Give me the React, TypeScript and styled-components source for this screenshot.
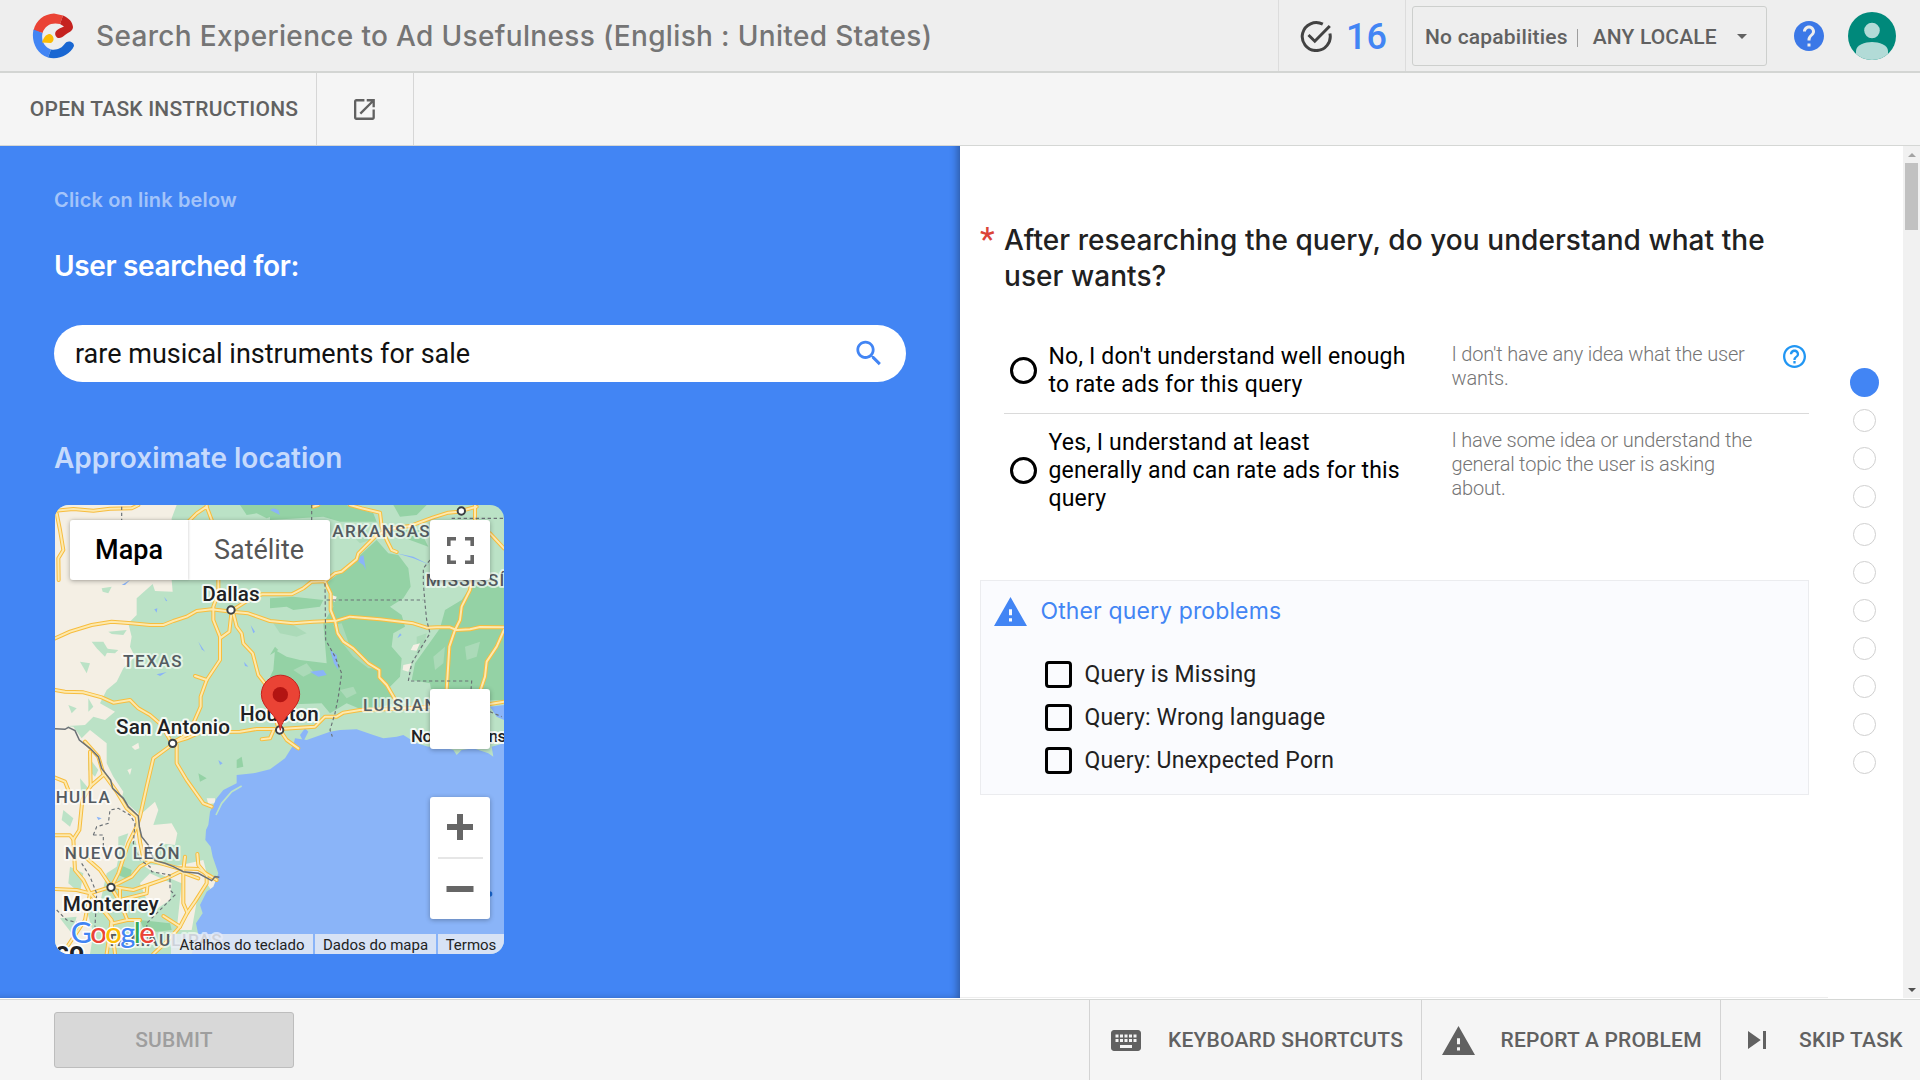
import React from 'react';
import styled, { createGlobalStyle } from 'styled-components';

const GlobalStyle = createGlobalStyle`
  *, *::before, *::after { box-sizing: border-box; }
  html, body { margin: 0; padding: 0; background: #fff; }
  body { font-family: Roboto, "Liberation Sans", sans-serif; overflow: hidden; }
`;

const display = 'Inter, "Open Sans", sans-serif';

const Page = styled.div`
  width: 1920px;
  height: 1080px;
  display: flex;
  flex-direction: column;
  overflow: hidden;
  background: #fff;
`;

/* ---------- Header ---------- */

const Header = styled.header`
  height: 73px;
  flex: none;
  display: flex;
  background: #eee;
  border-bottom: 2px solid #d3d5d3;
`;

const Brand = styled.div`
  flex: 1;
  display: flex;
  align-items: center;
  padding-left: 32px;
  gap: 20px;
`;

const Title = styled.h1`
  margin: 0;
  font: 500 28px/36px ${display};
  letter-spacing: 0.34px;
  color: #757575;
  white-space: nowrap;
`;

const Counter = styled.div`
  width: 128px;
  display: flex;
  align-items: center;
  padding-left: 21px;
  gap: 14px;
  border-left: 1px solid #dcdcdc;
  border-right: 1px solid #dcdcdc;
`;

const Count = styled.span`
  margin-top: 2px;
  font: 500 36px/42px Roboto, sans-serif;
  color: #4285f4;
`;

const LocalePicker = styled.div`
  width: 355px;
  height: 60px;
  margin: 6px 0 0 6px;
  padding: 1px 19px 0 12px;
  display: flex;
  align-items: center;
  border: 1px solid #cdcfcd;
  border-radius: 3px;
  color: #616161;
  font: 500 21px/28px Roboto, sans-serif;
  white-space: nowrap;
`;

const PickerText = styled.span<{ $spacing: number }>`
  letter-spacing: ${(p) => p.$spacing}px;
`;

const Bar = styled.span`
  width: 1px;
  height: 18px;
  margin: 2px 15px 0 9px;
  background: #9e9e9e;
`;

const Caret = styled.span`
  margin-left: auto;
  border: 5px solid transparent;
  border-top-color: #616161;
  border-bottom: 0;
`;

const Account = styled.div`
  width: 153px;
  display: flex;
  align-items: center;
  padding-left: 27px;
  gap: 24px;
`;

/* ---------- Toolbar ---------- */

const Toolbar = styled.nav`
  height: 73px;
  flex: none;
  display: flex;
  background: #f5f5f5;
  border-bottom: 1px solid #d5d7d5;
`;

const ToolItem = styled.div<{ $width: number; $indent?: number }>`
  width: ${(p) => p.$width}px;
  padding-left: ${(p) => p.$indent ?? 0}px;
  display: flex;
  align-items: center;
  justify-content: center;
  border-right: 1px solid #d6d6d6;
  color: #616161;
  font: 500 21px/28px Roboto, sans-serif;
  letter-spacing: 0.2px;
  white-space: nowrap;
`;

/* ---------- Main ---------- */

const Main = styled.main`
  height: 852px;
  flex: none;
  display: flex;
`;

const QueryPane = styled.section`
  width: 960px;
  padding: 40px 54px 0;
  background: #4285f4;
  box-shadow: inset -7px -3px 7px -4px rgba(0, 0, 0, 0.3);
`;

const Hint = styled.p`
  margin: 0;
  font: 600 20px/28px ${display};
  letter-spacing: 0.15px;
  color: #a3c4fa;
`;

const PaneHeading = styled.h2<{ $top: number; $color: string; $spacing: number }>`
  margin: ${(p) => p.$top}px 0 0;
  font: 600 28px/36px ${display};
  letter-spacing: ${(p) => p.$spacing}px;
  color: ${(p) => p.$color};
`;

const SearchBox = styled.div`
  height: 57px;
  margin-top: 41px;
  padding: 0 23px 0 21px;
  display: flex;
  align-items: center;
  justify-content: space-between;
  border-radius: 29px;
  background: #fff;
  color: #111;
  font: 400 27px/36px Roboto, sans-serif;
`;

const MapFrame = styled.div`
  position: relative;
  width: 449px;
  height: 449px;
  margin: 29px 0 0 1px;
  border-radius: 14px;
  overflow: hidden;
`;

const MapLayer = styled.svg`
  display: block;
  width: 449px;
  height: 449px;
`;

const MapCard = styled.div<{ $x: number; $y: number; $w: number; $h: number }>`
  position: absolute;
  left: ${(p) => p.$x}px;
  top: ${(p) => p.$y}px;
  width: ${(p) => p.$w}px;
  height: ${(p) => p.$h}px;
  display: flex;
  align-items: center;
  justify-content: center;
  background: #fff;
  border-radius: 3px;
  box-shadow: 0 1px 5px rgba(0, 0, 0, 0.3);
`;

const MapType = styled.span<{ $active?: boolean; $w: number }>`
  width: ${(p) => p.$w}px;
  line-height: 60px;
  text-align: center;
  font-size: 27px;
  font-weight: ${(p) => (p.$active ? 500 : 400)};
  color: ${(p) => (p.$active ? '#000' : '#565656')};
  box-shadow: ${(p) => (p.$active ? '1px 0 2px rgba(0,0,0,0.12)' : 'none')};
`;

const Credits = styled.div`
  position: absolute;
  right: 0;
  bottom: 0;
  height: 20px;
  display: flex;
  gap: 2px;
`;

const Credit = styled.span<{ $w: number }>`
  width: ${(p) => p.$w}px;
  background: rgba(232, 236, 244, 0.82);
  color: #222;
  font-size: 15px;
  line-height: 22px;
  text-align: center;
  white-space: nowrap;
`;

/* ---------- Questions ---------- */

const TaskPane = styled.section`
  flex: 1;
  display: flex;
  background: #fff;
`;

const Form = styled.div`
  width: 868px;
  padding: 76px 19px 0 20px;
  border-bottom: 1px solid #ededed;
`;

const Question = styled.div`
  display: flex;
`;

const Required = styled.span`
  width: 24px;
  font: 400 34px/34px Roboto, sans-serif;
  color: #db4437;
`;

const QuestionText = styled.h2`
  margin: 0;
  font: 500 28px/36px ${display};
  letter-spacing: 0.06px;
  color: #212121;
  white-space: nowrap;
`;

const Options = styled.div`
  margin: 34px 0 0 24px;
`;

const Option = styled.label<{ $height: number; $line?: boolean }>`
  height: ${(p) => p.$height}px;
  padding: 14px 3px 0 6px;
  display: flex;
  border-bottom: ${(p) => (p.$line ? '1px solid #dadada' : '0')};
`;

const Radio = styled.span`
  width: 27px;
  height: 27px;
  border: 3px solid #000;
  border-radius: 50%;
`;

const RadioCell = styled.span<{ $top: number }>`
  width: 38.5px;
  padding-top: ${(p) => p.$top}px;
  display: flex;
  align-items: flex-start;
`;

const OptionText = styled.span`
  width: 403px;
  padding-top: 1px;
  font: 400 23px/28px Roboto, sans-serif;
  letter-spacing: 0.18px;
  color: #000;
  white-space: pre-line;
`;

const OptionNote = styled.span`
  flex: 1;
  font: 300 20px/24px Roboto, sans-serif;
  letter-spacing: -0.2px;
  color: #757575;
  white-space: pre-line;
`;

const NoteHelp = styled.span`
  height: 23px;
  padding-top: 3px;
`;

const Problems = styled.div`
  height: 215px;
  margin-top: 54px;
  padding: 13px 0 0 13px;
  border: 1px solid #ebecef;
  background: #fafbfe;
`;

const ProblemsTitle = styled.div`
  display: flex;
  align-items: center;
  gap: 13.5px;
  height: 34px;
  font: 400 23px/34px ${display};
  letter-spacing: 0.12px;
  color: #4285f4;
`;

const CheckRow = styled.label`
  display: flex;
  align-items: center;
  gap: 12.5px;
  height: 27px;
  margin: 0 0 16px 51px;
  font: 400 23px/28px Roboto, sans-serif;
  letter-spacing: 0.18px;
  color: #212121;
`;

const CheckList = styled.div`
  padding-top: 33px;
`;

const CheckBox = styled.span`
  width: 27px;
  height: 27px;
  border: 3px solid #000;
  border-radius: 4px;
`;

const Steps = styled.div`
  width: 75px;
  padding: 222px 2px 0 0;
  display: flex;
  flex-direction: column;
  align-items: center;
  gap: 15px;
`;

const Step = styled.span<{ $current?: boolean }>`
  width: ${(p) => (p.$current ? 29 : 23)}px;
  height: ${(p) => (p.$current ? 29 : 23)}px;
  margin-bottom: ${(p) => (p.$current ? -3 : 0)}px;
  border: ${(p) => (p.$current ? '0' : '1px solid #d0d0d0')};
  border-radius: 50%;
  background: ${(p) => (p.$current ? '#4285f4' : '#fff')};
`;

const Scrollbar = styled.div`
  width: 17px;
  height: 852px;
  display: flex;
  flex-direction: column;
  align-items: center;
  background: #f1f1f1;
`;

const ScrollThumb = styled.div`
  width: 13px;
  height: 67px;
  background: #c1c1c1;
`;

const ScrollArrow = styled.span<{ $down?: boolean }>`
  width: 17px;
  height: 17px;
  margin-top: ${(p) => (p.$down ? 'auto' : '0')};
  display: flex;
  align-items: center;
  justify-content: center;
  &::after {
    content: '';
    border: 4px solid transparent;
    border-top: ${(p) => (p.$down ? '4px solid #505050' : '0')};
    border-bottom: ${(p) => (p.$down ? '0' : '4px solid #a3a3a3')};
  }
`;

/* ---------- Footer ---------- */

const Footer = styled.footer`
  height: 81px;
  margin-top: 1px;
  flex: none;
  display: flex;
  background: #f5f5f5;
  border-top: 1px solid #d5d7d5;
`;

const Submit = styled.button`
  width: 240px;
  height: 56px;
  margin: 12px auto 0 54px;
  padding: 0;
  border: 1px solid #bdbdbd;
  border-radius: 3px;
  background: #d8d8d8;
  color: #9e9e9e;
  font: 500 21px/28px Roboto, sans-serif;
  letter-spacing: 0.2px;
`;

const FooterItem = styled.div<{ $width: number; $pad: number; $gap: number }>`
  width: ${(p) => p.$width}px;
  padding-left: ${(p) => p.$pad}px;
  gap: ${(p) => p.$gap}px;
  display: flex;
  align-items: center;
  border-left: 1px solid #d3d3d3;
  color: #616161;
  font: 500 21px/28px Roboto, sans-serif;
  letter-spacing: 0.2px;
  white-space: nowrap;
`;

/* ---------- Drawings ---------- */

const Logo = () => (
  <svg width="44" height="48" viewBox="32 12 44 48">
    <path d="M33.500 30.500C36 20 44 14 54 13.500L63 15.500 60 24C52 22 45 25 42.500 33Z" fill="#ea4335" />
    <path d="M63 15.500C69 18 72.500 22 73 27C73 31 69 32 65 35C61 39 57 39 55.500 35.500C54 31 58 29 64 26.500L60 24Z" fill="#c5221f" />
    <path d="M33.500 29.500L42.500 33C41 41 44 47 51 49.500L48 57.500C36 53.500 31 41 33.500 29.500Z" fill="#4285f4" />
    <path d="M48 57.500L51 49.500C57 50.500 62 48 65 43.500C67 40 74 41 74 46C70 55 59 60 48 57.500Z" fill="#1967d2" />
    <path d="M42 42.500C44 36 47 34 50 34C54 35.500 55 41 51 43Z" fill="#fbbc04" />
  </svg>
);

const CheckCircle = () => (
  <svg width="32" height="32" viewBox="0 0 32 32" fill="none" stroke="#424242" strokeWidth="3">
    <path d="M22.800 4.200A14 14 0 1 0 29.900 13.500" />
    <path d="M8.500 15L14.800 21.200 29.800 6" />
  </svg>
);

const HelpSolid = () => (
  <svg width="30" height="30" viewBox="2 2 20 20">
    <path
      fill="#3b78e7"
      d="M12 2C6.480 2 2 6.480 2 12s4.480 10 10 10 10-4.480 10-10S17.520 2 12 2zm1 17h-2v-2h2v2zm2.070-7.750l-.9.920C13.450 12.900 13 13.500 13 15h-2v-.5c0-1.100.45-2.100 1.170-2.830l1.240-1.260c.37-.36.59-.86.59-1.410 0-1.100-.9-2-2-2s-2 .9-2 2H8c0-2.210 1.790-4 4-4s4 1.790 4 4c0 .88-.36 1.680-.93 2.250z"
    />
  </svg>
);

const HelpOutline = () => (
  <svg width="23" height="23" viewBox="2 2 20 20">
    <path
      fill="#2196f3"
      d="M11 18h2v-2h-2v2zm1-16C6.480 2 2 6.480 2 12s4.480 10 10 10 10-4.480 10-10S17.520 2 12 2zm0 18c-4.410 0-8-3.590-8-8s3.590-8 8-8 8 3.590 8 8-3.590 8-8 8zm0-14c-2.210 0-4 1.790-4 4h2c0-1.100.9-2 2-2s2 .9 2 2c0 2-3 1.750-3 5h2c0-2.250 3-2.500 3-5 0-2.210-1.790-4-4-4z"
    />
  </svg>
);

const Avatar = () => (
  <svg width="48" height="48" viewBox="0 0 48 48">
    <defs>
      <clipPath id="avatar">
        <circle cx="24" cy="24" r="24" />
      </clipPath>
    </defs>
    <g clipPath="url(#avatar)">
      <rect width="48" height="48" fill="#00897b" />
      <circle cx="24" cy="18.500" r="7.800" fill="#b2dbd7" />
      <path d="M8 48V39C8 33 17 30 24 30S40 33 40 39V48Z" fill="#b2dbd7" />
    </g>
  </svg>
);

const OpenInNew = () => (
  <svg width="22" height="21" viewBox="3 3 19 18">
    <path
      fill="#616161"
      d="M19 19H5V5h7V3H5c-1.110 0-2 .9-2 2v14c0 1.100.89 2 2 2h14c1.100 0 2-.9 2-2v-7h-2v7zM14 3v2h3.590l-9.830 9.830 1.410 1.410L19 6.410V10h2V3h-7z"
    />
  </svg>
);

const SearchIcon = () => (
  <svg width="28" height="28" viewBox="2 2.500 20 20">
    <path
      fill="#4285f4"
      d="M15.500 14h-.79l-.28-.27C15.410 12.590 16 11.110 16 9.500 16 5.910 13.090 3 9.500 3S3 5.910 3 9.500 5.910 16 9.500 16c1.610 0 3.090-.59 4.230-1.570l.27.28v.79l5 4.990L20.490 19l-4.990-5zm-6 0C7.010 14 5 11.990 5 9.500S7.010 5 9.500 5 14 7.010 14 9.500 11.990 14 9.500 14z"
    />
  </svg>
);

const Warning = ({ color }: { color: string }) => (
  <svg width="33" height="29" viewBox="1 2 22 19" preserveAspectRatio="none">
    <path fill={color} d="M1 21h22L12 2 1 21zm12-3h-2v-2h2v2zm0-4h-2v-4h2v4z" />
  </svg>
);

const Keyboard = () => (
  <svg width="30" height="21" viewBox="2 5 20 14">
    <path
      fill="#616161"
      d="M20 5H4c-1.100 0-1.990.9-1.990 2L2 17c0 1.100.9 2 2 2h16c1.100 0 2-.9 2-2V7c0-1.100-.9-2-2-2zm-9 3h2v2h-2V8zm0 3h2v2h-2v-2zM8 8h2v2H8V8zm0 3h2v2H8v-2zm-1 2H5v-2h2v2zm0-3H5V8h2v2zm9 7H8v-2h8v2zm0-4h-2v-2h2v2zm0-3h-2V8h2v2zm3 3h-2v-2h2v2zm0-3h-2V8h2v2z"
    />
  </svg>
);

const SkipNext = () => (
  <svg width="18" height="18" viewBox="6 6 12 12">
    <path fill="#616161" d="M6 18l8.500-6L6 6v12zM16 6v12h2V6h-2z" />
  </svg>
);

const Fullscreen = () => (
  <svg width="27" height="27" viewBox="0 0 27 27" fill="none" stroke="#666" strokeWidth="3.600">
    <path d="M9 1.800H1.800V9M18 1.800H25.200V9M9 25.200H1.800V18M18 25.200H25.200V18" />
  </svg>
);

const ZoomButtons = () => (
  <svg width="60" height="122" viewBox="0 0 60 122" fill="#666">
    <rect x="17" y="27" width="26" height="6" />
    <rect x="27" y="17" width="6" height="26" />
    <rect x="8" y="60" width="45" height="2" fill="#e6e6e6" />
    <rect x="16.500" y="89" width="27" height="6" />
  </svg>
);

/* ---------- Map ---------- */

const roads = [
  '45,445 90,425 155,405 215,395 275,400 330,405 370,405 400,393 440,380 470,363 515,358 575,365 625,370 690,393 760,400 820,395 890,392 930,380 1020,388 1120,400 1160,413 1190,412 1230,412 1250,420 1290,418 1320,411 1392,412',
  '575,362 625,330 665,313 755,313 790,295 815,275 855,274 885,250 905,245 950,208 955,190 1010,135 1060,115 1110,108 1180,82 1225,68 1255,65 1310,50',
  '535,260 535,310 520,350 520,390 540,440 540,510 500,570 482,620 482,650 460,700 430,740 395,760',
  '575,362 568,425 540,445',
  '580,370 590,410 605,430 610,460 638,490 655,555 690,600 700,660 715,715',
  '45,600 75,605 130,607 185,622 220,638 270,630 295,655 330,675 365,705 390,750',
  '400,757 440,745 480,727 600,725 650,717 720,717 825,710 855,680 890,680 910,668 960,660 1060,657 1170,650 1350,642 1392,635',
  '395,760 450,730 475,728',
  '720,720 740,750 775,775',
  '700,722 690,745 665,748',
  '410,765 410,820 440,870 490,940 515,950',
  '395,765 340,805 320,890 300,980 290,1010 265,1060 235,1150 215,1190',
  '135,755 175,800 190,850 230,905 260,955 290,980 300,1055',
  '150,785 152,888 190,855',
  '152,888 127,930 118,1020 100,1048 90,1036 45,1036',
  '100,1048 105,1140 130,1170 150,1210 215,1190',
  '45,1197 110,1200 150,1210 135,1290 85,1365',
  '45,863 75,875 85,900',
  '140,1105 180,1140 210,1185',
  '215,1190 275,1160 300,1130 335,1110',
  '215,1190 280,1200 380,1165 420,1145 475,1165',
  '300,1055 310,1105 345,1115 415,1135 475,1137 530,1170',
  '435,1100 430,1140 430,1240 442,1268',
  '472,1092 475,1125 500,1155 500,1180 465,1235 442,1268 420,1310 370,1278',
  '420,1310 385,1350 340,1392',
  '215,1195 240,1235 262,1290 220,1300 165,1230',
  '215,1300 225,1392',
  '150,1210 215,1290 200,1392',
  '240,1195 240,1230 320,1210 322,1190',
  '300,1290 262,1290',
  '855,275 872,310 872,360 885,392 893,430 910,455 940,475 985,520 1018,540 1018,562 1040,585 1065,628',
  '1295,270 1290,300 1265,350 1260,390 1245,420 1228,470 1220,600',
  '1392,420 1370,470 1340,515 1335,560 1320,605',
  '930,45 965,55 1020,68 1025,110 1040,150 1055,180 1070,186',
  '445,95 470,70 500,50 515,90',
  '500,40 500,50',
  '45,62 100,57 160,62 210,56 275,55 295,45',
  '50,70 60,120 70,180 55,205 56,270',
  '1350,130 1392,175',
  '1305,45 1305,90',
  '465,558 500,570',
  '820,50 835,45',
];

const borders = [
  '855,280 857,450 885,500 905,550 895,620 885,670 870,720 877,740',
  '860,330 1150,330',
  '1170,210 1150,235 1150,280 1155,340 1160,390 1170,430 1145,470 1115,520 1105,573 1295,573 1292,615',
  '815,45 815,92',
  '245,50 245,92',
  '1235,85 1392,85',
  '160,1035 170,1010 205,1000 210,960 235,955 270,975 285,1000 280,1060 300,1110 330,1130 335,1145 390,1155 390,1200 405,1215 320,1300 325,1370',
  '160,1035 190,1035 190,1080',
  '125,1120 150,1160 170,1210 165,1310',
  '50,1260 80,1290 160,1310',
  '1350,665 1385,680',
];

const forests = [
  '860,280 950,205 1010,150 1045,190 1075,195 1105,235 1112,290 1090,325 1050,350 1085,375 1095,410 1060,430 1055,470 1085,505 1080,560 1050,590 1060,640 980,665 920,640 870,670 845,640 700,645 715,600 690,560 700,540 705,480 740,500 780,510 860,520 850,400 880,350',
  '1175,450 1200,415 1215,360 1265,330 1295,285 1392,290 1392,630 1180,635 1170,580 1115,570 1125,520',
  '690,45 920,45 1000,70 1010,95 900,95 850,80 690,90',
  '1060,45 1160,45 1130,75 1080,80',
  '1050,120 1140,120 1165,170 1110,150',
  '690,325 760,320 850,330 840,350 760,360 740,350 690,355',
  '600,45 720,45 720,70 680,85 650,70 620,75',
  '240,1125 275,1140 270,1170 235,1155',
  '300,1290 390,1300 395,1320 350,1325 310,1315',
  '715,480 690,495 705,470',
  '475,850 500,865 480,875',
  '650,900 690,860 680,895',
  '590,810 605,800 610,830 590,835',
];

const clearings = [
  '880,405 905,400 930,470 990,515 1010,535 985,535 940,500 900,450',
  '700,400 760,405 800,430 770,440 720,430',
  '1130,440 1160,430 1150,470 1130,500',
  '760,540 800,520 820,545 790,560',
  '900,600 940,590 950,610 920,625',
  '1180,500 1215,470 1210,520 1185,540',
  '1275,470 1320,455 1310,500 1280,510',
  '930,130 980,120 990,150 960,160',
];

const drylands = [
  '45,45 410,45 395,85 395,270 398,305 345,303 338,282 290,325 290,375 265,400 275,440 270,470 285,500 250,535 230,575 200,600 180,640 225,665 195,690 160,680 135,705 45,710',
  '45,705 100,710 125,745 150,720 200,760 200,820 220,860 250,905 245,925 300,975 345,935 355,960 340,1005 395,1000 412,1030 405,1065 360,1060 330,1115 300,1100 285,1050 240,1080 230,1130 200,1150 180,1240 140,1260 160,1330 150,1392 45,1392',
  '300,1120 400,1130 490,1110 500,1150 535,1165 520,1210 500,1180 470,1235 455,1320 410,1320 425,1180 330,1140',
  '330,1150 395,1180 390,1230 345,1260 320,1230 300,1180',
  '275,770 295,758 298,775 285,780',
  '262,840 275,835 270,855',
  '500,925 525,925 525,940 505,942',
  '1120,465 1140,460 1130,482 1112,480',
  '1090,525 1115,520 1105,545 1088,540',
  '875,315 890,320 885,335 872,330',
];

const prairies = [
  '185,295 215,290 205,310 188,305',
  '155,455 190,455 205,480 195,500 170,475',
  '205,425 260,420 250,435 215,432',
  '120,515 150,520 140,550',
  '190,475 235,480 225,490 195,488',
  '85,645 110,655 95,670',
  '145,625 160,650 145,665',
  '145,800 175,840 165,860 145,840',
  '120,865 145,895 125,930',
  '70,960 100,985 90,1010 65,990',
  '235,1040 265,1030 250,1080 235,1070',
  '90,1130 130,1150 120,1210 85,1180',
  '60,1285 110,1280 95,1330',
];

const waters = [
  'M1392,690L1370,680 1350,650 1392,645V1392H455L475,1335 468,1300 488,1270 480,1245 500,1205 520,1190 530,1165 535,1150 518,1100 512,1070 496,1050 498,1020 505,1005 510,965 530,925 550,900 590,880 590,855 640,850 690,838 735,805 760,765 765,745 800,750 870,725 900,720 950,718 1000,735 1030,745 1070,740 1090,735 1130,760 1165,770 1200,770 1240,780 1250,795 1265,780 1300,775 1345,790 1360,800 1355,770 1392,760Z',
  'M780,735L795,715 805,725 790,755Z',
  'M1070,190L1120,205 1170,225 1120,200Z',
  'M960,200L970,195 978,240 970,225 955,215Z',
  'M870,480L890,495 895,540 882,520Z',
  'M810,545L850,540 860,555 835,560Z',
  'M632,405L645,425 640,430Z',
  'M612,515L625,530 615,528Z',
  'M372,320L382,332 378,334Z',
  'M343,358L352,355 350,368Z',
  'M350,553L380,546 360,558Z',
  'M475,455L495,485 485,478Z',
  'M245,285L270,270 255,285Z',
  'M690,60L720,75 715,60 700,55Z',
  'M535,810L548,820 540,825Z',
  'M170,980L185,985 175,990Z',
  'M1080,430L1072,445 1085,435Z',
];

const cityDots: [number, number][] = [
  [573, 360],
  [398, 760],
  [213, 1192],
  [719, 720],
  [1264, 63],
];

type Place = { x: number; y: number; w: number; text: string; size: number; region?: boolean; heavy?: boolean };

const places: Place[] = [
  { x: 487, y: 332, w: 172, text: 'Dallas', size: 62 },
  { x: 600, y: 693, w: 236, text: 'Houston', size: 62 },
  { x: 228, y: 731, w: 342, text: 'San Antonio', size: 62 },
  { x: 68, y: 1263, w: 288, text: 'Monterrey', size: 62 },
  { x: 1113, y: 757, w: 286, text: 'Nova Orleans', size: 52 },
  { x: 249, y: 532, w: 176, text: 'TEXAS', size: 51, region: true },
  { x: 877, y: 140, w: 292, text: 'ARKANSAS', size: 51, region: true },
  { x: 1157, y: 288, w: 290, text: 'MISSISSÍPI', size: 51, region: true },
  { x: 969, y: 663, w: 260, text: 'LUISIANA', size: 51, region: true },
  { x: 47, y: 940, w: 162, text: 'HUILA', size: 51, region: true },
  { x: 74, y: 1107, w: 345, text: 'NUEVO LEÓN', size: 51, region: true },
  { x: 200, y: 1367, w: 345, text: 'TAMAULIPAS', size: 51, region: true },
  { x: 46, y: 1410, w: 86, text: 'co', size: 78, heavy: true },
];

const wordmark: [string, string][] = [
  ['G', '#4285f4'],
  ['o', '#ea4335'],
  ['o', '#fbbc04'],
  ['g', '#4285f4'],
  ['l', '#34a853'],
  ['e', '#ea4335'],
];

const TexasMap = () => (
  <MapLayer viewBox="45 45 1347 1347">
    <rect x="45" y="45" width="1347" height="1347" fill="#bbe2c6" />
    {forests.map((p) => (
      <polygon key={p} points={p} fill="#94d2a5" />
    ))}
    {clearings.map((p) => (
      <polygon key={p} points={p} fill="#abdab8" />
    ))}
    {drylands.map((p) => (
      <polygon key={p} points={p} fill="#f4efe4" />
    ))}
    {prairies.map((p) => (
      <polygon key={p} points={p} fill="#bbe2c6" />
    ))}
    {waters.map((d) => (
      <path key={d} d={d} fill="#8ab4f8" />
    ))}
    <path d="M528,975L545,940 575,905 605,888" fill="none" stroke="#bbe2c6" strokeWidth="5" />
    <g fill="none" strokeLinejoin="round" strokeLinecap="round">
      {roads.map((p) => (
        <polyline key={p} points={p} stroke="#f7bd3e" strokeWidth="12" />
      ))}
      {roads.map((p) => (
        <polyline key={p} points={p} stroke="#fde9ae" strokeWidth="6" />
      ))}
    </g>
    <g fill="none" stroke="#6b7176" strokeWidth="3.500">
      {borders.map((p) => (
        <polyline key={p} points={p} strokeDasharray="10 8" />
      ))}
      <polyline
        strokeWidth="4.500"
        points="45,716 75,718 85,712 105,722 118,750 150,775 175,800 185,835 212,870 218,895 250,925 265,950 295,978 298,1010 305,1040 325,1065 330,1085 345,1112 375,1120 400,1130 430,1145 475,1150 515,1172 525,1160 538,1162"
      />
    </g>
    {cityDots.map(([x, y]) => (
      <circle key={x} cx={x} cy={y} r="11" fill="#fff" stroke="#3c4043" strokeWidth="6" />
    ))}
    <g fontFamily="Roboto, sans-serif" paintOrder="stroke" strokeLinejoin="round">
      {places.map((p) => (
        <text
          key={p.text}
          x={p.x}
          y={p.y}
          fontSize={p.size}
          fontWeight={p.heavy ? 700 : 500}
          textLength={p.w}
          fill={p.region ? '#545b61' : '#202124'}
          stroke="#fff"
          strokeOpacity={p.region ? 0.6 : 0.85}
          strokeWidth="12"
        >
          {p.text}
        </text>
      ))}
    </g>
    <circle cx="1349" cy="1212" r="8" fill="#1967d2" />
    <path
      d="M721,721C716,673 664,658 664,613A57,57 0 0 1 779,613C779,658 727,673 721,721Z"
      fill="#ea4335"
      stroke="#c5221f"
      strokeWidth="3"
    />
    <circle cx="721" cy="614" r="23" fill="#b31412" />
    <text
      x="92"
      y="1360"
      fontFamily="Lato, sans-serif"
      fontSize="88"
      fontWeight="500"
      textLength="252"
      stroke="#fff"
      strokeWidth="8"
      paintOrder="stroke"
    >
      {wordmark.map(([letter, color], i) => (
        <tspan key={i} fill={color}>
          {letter}
        </tspan>
      ))}
    </text>
  </MapLayer>
);

export default function App() {
  return (
    <Page>
      <GlobalStyle />
      <Header>
        <Brand>
          <Logo />
          <Title>Search Experience to Ad Usefulness (English : United States)</Title>
        </Brand>
        <Counter>
          <CheckCircle />
          <Count>16</Count>
        </Counter>
        <LocalePicker>
          <PickerText $spacing={0.2}>No capabilities</PickerText>
          <Bar />
          <PickerText $spacing={0.15}>ANY LOCALE</PickerText>
          <Caret />
        </LocalePicker>
        <Account>
          <HelpSolid />
          <Avatar />
        </Account>
      </Header>

      <Toolbar>
        <ToolItem $width={317} $indent={12}>
          OPEN TASK INSTRUCTIONS
        </ToolItem>
        <ToolItem $width={97}>
          <OpenInNew />
        </ToolItem>
      </Toolbar>

      <Main>
        <QueryPane>
          <Hint>Click on link below</Hint>
          <PaneHeading $top={34} $color="#fff" $spacing={-0.35}>
            User searched for:
          </PaneHeading>
          <SearchBox>
            rare musical instruments for sale
            <SearchIcon />
          </SearchBox>
          <PaneHeading $top={58} $color="#c6dafc" $spacing={0}>
            Approximate location
          </PaneHeading>
          <MapFrame>
            <TexasMap />
            <MapCard $x={15} $y={15} $w={260} $h={60}>
              <MapType $active $w={118}>
                Mapa
              </MapType>
              <MapType $w={142}>Satélite</MapType>
            </MapCard>
            <MapCard $x={375} $y={15} $w={60} $h={60}>
              <Fullscreen />
            </MapCard>
            <MapCard $x={375} $y={184} $w={60} $h={60} />
            <MapCard $x={375} $y={292} $w={60} $h={122}>
              <ZoomButtons />
            </MapCard>
            <Credits>
              <Credit $w={142}>Atalhos do teclado</Credit>
              <Credit $w={121}>Dados do mapa</Credit>
              <Credit $w={66}>Termos</Credit>
            </Credits>
          </MapFrame>
        </QueryPane>

        <TaskPane>
          <Form>
            <Question>
              <Required>*</Required>
              <QuestionText>
                After researching the query, do you understand what the
                <br />
                user wants?
              </QuestionText>
            </Question>
            <Options>
              <Option $height={86} $line>
                <RadioCell $top={15}>
                  <Radio />
                </RadioCell>
                <OptionText>{"No, I don't understand well enough\nto rate ads for this query"}</OptionText>
                <OptionNote>{"I don't have any idea what the user\nwants."}</OptionNote>
                <NoteHelp>
                  <HelpOutline />
                </NoteHelp>
              </Option>
              <Option $height={112}>
                <RadioCell $top={29}>
                  <Radio />
                </RadioCell>
                <OptionText>{'Yes, I understand at least\ngenerally and can rate ads for this\nquery'}</OptionText>
                <OptionNote>{'I have some idea or understand the\ngeneral topic the user is asking\nabout.'}</OptionNote>
              </Option>
            </Options>
            <Problems>
              <ProblemsTitle>
                <Warning color="#4285f4" />
                Other query problems
              </ProblemsTitle>
              <CheckList>
                {['Query is Missing', 'Query: Wrong language', 'Query: Unexpected Porn'].map((label) => (
                  <CheckRow key={label}>
                    <CheckBox />
                    {label}
                  </CheckRow>
                ))}
              </CheckList>
            </Problems>
          </Form>
          <Steps>
            <Step $current />
            {Array.from({ length: 10 }, (_, i) => (
              <Step key={i} />
            ))}
          </Steps>
          <Scrollbar>
            <ScrollArrow />
            <ScrollThumb />
            <ScrollArrow $down />
          </Scrollbar>
        </TaskPane>
      </Main>

      <Footer>
        <Submit>SUBMIT</Submit>
        <FooterItem $width={332} $pad={21} $gap={27}>
          <Keyboard />
          KEYBOARD SHORTCUTS
        </FooterItem>
        <FooterItem $width={299} $pad={20} $gap={25.5}>
          <Warning color="#616161" />
          REPORT A PROBLEM
        </FooterItem>
        <FooterItem $width={200} $pad={27} $gap={33}>
          <SkipNext />
          SKIP TASK
        </FooterItem>
      </Footer>
    </Page>
  );
}
